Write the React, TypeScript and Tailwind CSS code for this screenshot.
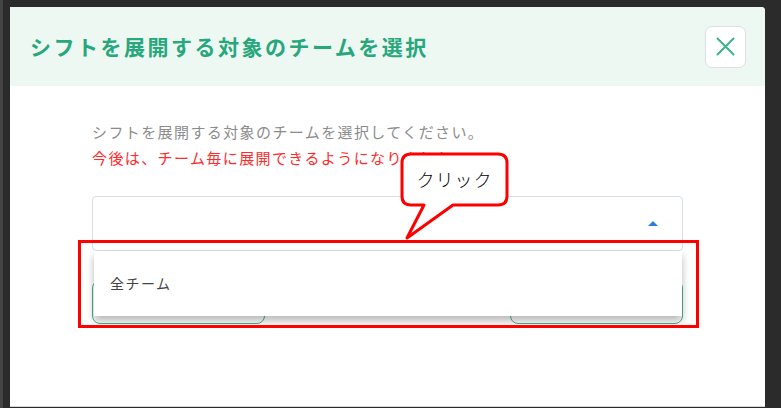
import React from 'react';

const jp = { fontFamily: '"Noto Sans CJK JP", "Noto Sans", sans-serif' };

function CloseIcon() {
  return (
    <svg width="19" height="19" viewBox="0 0 19 19" fill="none">
      <path d="M1.5 1.5 L17.5 17.5 M17.5 1.5 L1.5 17.5" stroke="#3bb58a" strokeWidth="2" strokeLinecap="round" />
    </svg>
  );
}

function Callout() {
  return (
    <div className="absolute left-[390px] top-[145px] w-[112px] h-[90px]">
      <svg width="112" height="90" viewBox="0 0 112 90" className="absolute inset-0">
        <path
          d="M11 2 H98 Q107 2 107 11 V44 Q107 53 98 53 H53 L7 86 L24 53 H11 Q2 53 2 44 V11 Q2 2 11 2 Z"
          fill="#ffffff"
          stroke="#ff0000"
          strokeWidth="3"
          strokeLinejoin="round"
        />
      </svg>
      <div className="absolute left-[2px] top-[2px] w-[105px] h-[51px] flex items-center justify-center text-[18px] font-light text-black tracking-[1px]">
        クリック
      </div>
    </div>
  );
}

export default function App() {
  return (
    <div className="w-[781px] h-[419px] bg-white overflow-hidden" style={jp}>
      <div className="h-[408px] bg-[#2b2b2b] border-l-[3px] border-[#444444] pl-[7px] pr-[16px] pt-[7px]">
        <div className="relative h-[400px] bg-white rounded-tr-[4px] border-b border-[#d6d6d6] flex flex-col">
          <div className="h-[79px] bg-[#eef8f3] rounded-tr-[4px] flex items-center justify-between pl-[20px] pr-[19px]">
            <h1 className="text-[21px] font-bold tracking-[2.5px] text-[#27a77c]">
              シフトを展開する対象のチームを選択
            </h1>
            <button className="w-[41px] h-[42px] bg-white border border-[#dcdfe3] rounded-[7px] flex items-center justify-center">
              <CloseIcon />
            </button>
          </div>

          <div className="px-[82px] pt-[33px]">
            <p className="text-[15px] leading-[26px] tracking-[1.4px] text-[#8c8c8c]">
              シフトを展開する対象のチームを選択してください。
            </p>
            <p className="text-[15px] leading-[26px] tracking-[1.4px] text-[#ff2b2b]">
              今後は、チーム毎に展開できるようになりました。
            </p>

            <div className="relative mt-[25px]">
              <div className="h-[55px] border border-[#d8dee6] rounded-[4px] flex items-center justify-end pr-[24px]">
                <div className="w-0 h-0 border-l-[5px] border-r-[5px] border-b-[5px] border-l-transparent border-r-transparent border-b-[#2a7de1]" />
              </div>

              <div className="flex justify-between mt-[29px]">
                <div className="w-[173px] h-[44px] border border-[#3fb68b] rounded-[8px]" />
                <div className="w-[173px] h-[44px] border border-[#3fb68b] rounded-[8px]" />
              </div>

              <div className="absolute left-[2px] right-[1px] top-[55px] h-[65px] bg-white shadow-[0_5px_8px_rgba(0,0,0,0.28)] flex items-center pl-[16px]">
                <span className="text-[14px] tracking-[1.5px] text-[#444444]">全チーム</span>
              </div>
            </div>
          </div>

          <div className="absolute left-[68px] top-[233px] w-[621px] h-[88px] border-[3px] border-[#ff0000]" />
          <Callout />
        </div>
      </div>
    </div>
  );
}
